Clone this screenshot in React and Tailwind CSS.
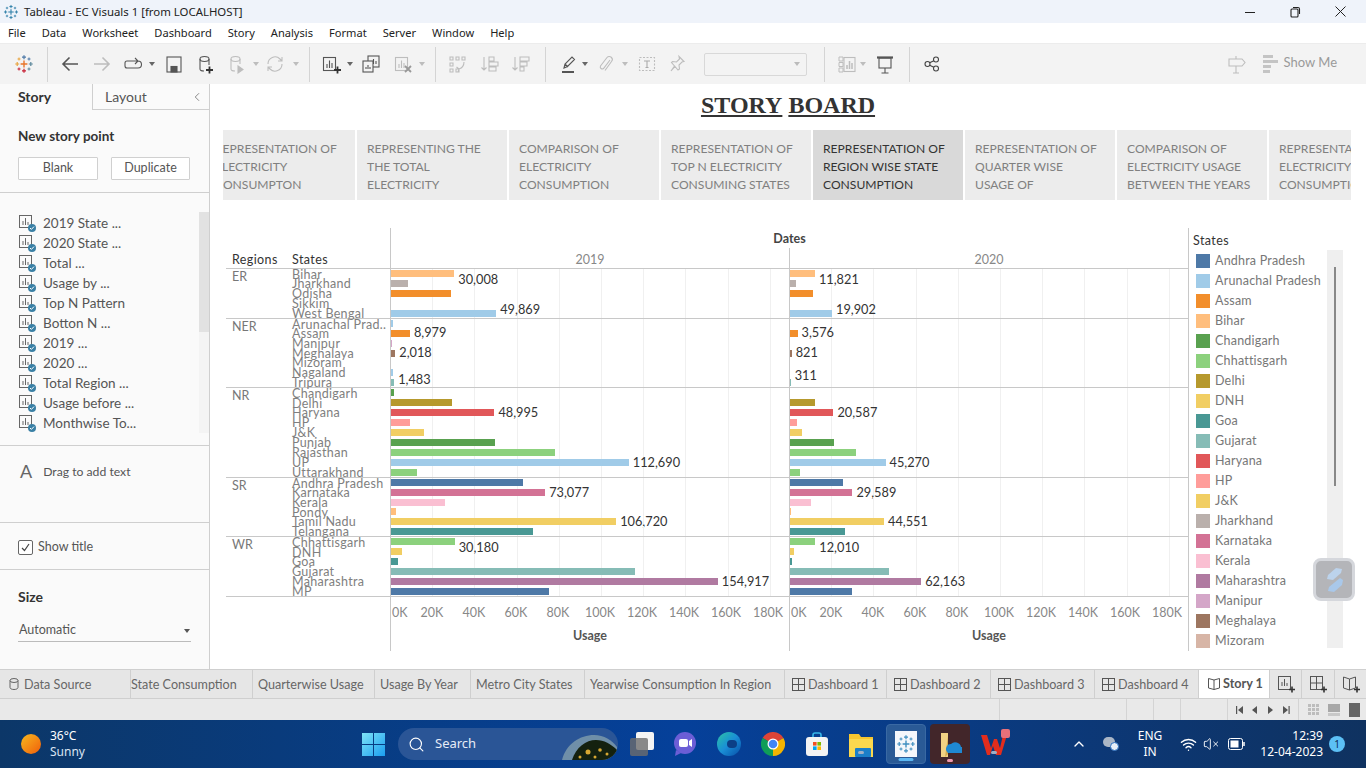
import React from 'react';
import { ChevronLeft, Search, Wifi, VolumeX, ChevronUp } from 'lucide-react';

const COLORS = {
  blue: '#4e79a7', sky: '#a0cbe8', orange: '#f28e2b', peach: '#ffbe7d', green: '#59a14f', lime: '#8cd17d',
  olive: '#b6992d', yellow: '#f1ce63', teal: '#499894', mint: '#86bcb6', red: '#e15759', rose: '#ff9d9a',
  stone: '#bab0ac', pink: '#d37295', blush: '#fabfd2', purple: '#b07aa1', mauve: '#d4a6c8', brown: '#9d7660', tan: '#d7b5a6',
};

const PX_PER_K = 2.11;

// a/b = usage in thousands for 2019/2020, la/lb = data label, da/db = label nudge
const REGIONS = [
  { name: 'ER', h: 'h-[50px]', rows: [
    { n: 'Bihar', c: 'peach', a: 30.008, b: 11.821, la: '30,008', lb: '11,821', da: 'translate-y-[5px]', db: 'translate-y-[5px]' },
    { n: 'Jharkhand', c: 'stone', a: 8.2, b: 2.8 },
    { n: 'Odisha', c: 'orange', a: 28.6, b: 10.8 },
    { n: 'Sikkim', c: 'sky', a: 0, b: 0 },
    { n: 'West Bengal', c: 'sky', a: 49.869, b: 19.902, la: '49,869', lb: '19,902', da: '-translate-y-[4px]', db: '-translate-y-[4px]' },
  ] },
  { name: 'NER', h: 'h-[69px]', rows: [
    { n: 'Arunachal Prad..', c: 'sky', a: 0.8, b: 0 },
    { n: 'Assam', c: 'orange', a: 8.979, b: 3.576, la: '8,979', lb: '3,576', da: '-translate-y-[1px]', db: '-translate-y-[1px]' },
    { n: 'Manipur', c: 'mauve', a: 0.7, b: 0 },
    { n: 'Meghalaya', c: 'brown', a: 2.018, b: 0.821, la: '2,018', lb: '821', da: '-translate-y-[1px]', db: '-translate-y-[1px]' },
    { n: 'Mizoram', c: 'tan', a: 0, b: 0 },
    { n: 'Nagaland', c: 'sky', a: 0.9, b: 0 },
    { n: 'Tripura', c: 'mint', a: 1.483, b: 0.311, la: '1,483', lb: '311', da: '-translate-y-[3px]', db: '-translate-y-[7px]' },
  ] },
  { name: 'NR', h: 'h-[90px]', rows: [
    { n: 'Chandigarh', c: 'green', a: 1.5, b: 0 },
    { n: 'Delhi', c: 'olive', a: 29, b: 11.9 },
    { n: 'Haryana', c: 'red', a: 48.995, b: 20.587, la: '48,995', lb: '20,587' },
    { n: 'HP', c: 'rose', a: 9.2, b: 3.2 },
    { n: 'J&K', c: 'yellow', a: 15.8, b: 5.7 },
    { n: 'Punjab', c: 'green', a: 49.5, b: 20.7 },
    { n: 'Rajasthan', c: 'lime', a: 77.9, b: 31.2 },
    { n: 'UP', c: 'sky', a: 112.69, b: 45.27, la: '112,690', lb: '45,270' },
    { n: 'Uttarakhand', c: 'lime', a: 12.5, b: 4.8 },
  ] },
  { name: 'SR', h: 'h-[59px]', rows: [
    { n: 'Andhra Pradesh', c: 'blue', a: 62.7, b: 25.1 },
    { n: 'Karnataka', c: 'pink', a: 73.077, b: 29.589, la: '73,077', lb: '29,589' },
    { n: 'Kerala', c: 'blush', a: 25.7, b: 9.9 },
    { n: 'Pondy', c: 'peach', a: 2.5, b: 0.4 },
    { n: 'Tamil Nadu', c: 'yellow', a: 106.72, b: 44.551, la: '106,720', lb: '44,551' },
    { n: 'Telangana', c: 'teal', a: 67.4, b: 26 },
  ] },
  { name: 'WR', h: 'h-[60px]', rows: [
    { n: 'Chhattisgarh', c: 'lime', a: 30.18, b: 12.01, la: '30,180', lb: '12,010', da: 'translate-y-[5px]', db: 'translate-y-[5px]' },
    { n: 'DNH', c: 'yellow', a: 5.4, b: 1.8 },
    { n: 'Goa', c: 'teal', a: 3.4, b: 0.9 },
    { n: 'Gujarat', c: 'mint', a: 115.6, b: 46.9 },
    { n: 'Maharashtra', c: 'purple', a: 154.917, b: 62.163, la: '154,917', lb: '62,163' },
    { n: 'MP', c: 'blue', a: 75, b: 29.4 },
  ] },
];

const LEGEND = [
  ['Andhra Pradesh', 'blue'], ['Arunachal Pradesh', 'sky'], ['Assam', 'orange'], ['Bihar', 'peach'], ['Chandigarh', 'green'],
  ['Chhattisgarh', 'lime'], ['Delhi', 'olive'], ['DNH', 'yellow'], ['Goa', 'teal'], ['Gujarat', 'mint'], ['Haryana', 'red'],
  ['HP', 'rose'], ['J&K', 'yellow'], ['Jharkhand', 'stone'], ['Karnataka', 'pink'], ['Kerala', 'blush'], ['Maharashtra', 'purple'],
  ['Manipur', 'mauve'], ['Meghalaya', 'brown'], ['Mizoram', 'tan'],
];

const STORY_POINTS = [
  { lines: ['REPRESENTATION OF', 'ELECTRICITY', 'CONSUMPTON'], cls: '-ml-[18px]' },
  { lines: ['REPRESENTING THE', 'THE TOTAL', 'ELECTRICITY'] },
  { lines: ['COMPARISON OF', 'ELECTRICITY', 'CONSUMPTION'] },
  { lines: ['REPRESENTATION OF', 'TOP N ELECTRICITY', 'CONSUMING STATES'] },
  { lines: ['REPRESENTATION OF', 'REGION WISE STATE', 'CONSUMPTION'], active: true },
  { lines: ['REPRESENTATION OF', 'QUARTER WISE', 'USAGE OF'] },
  { lines: ['COMPARISON OF', 'ELECTRICITY USAGE', 'BETWEEN THE YEARS'] },
  { lines: ['REPRESENTATION OF', 'ELECTRICITY', 'CONSUMPTION'] },
];

const SHEETS = ['2019 State ...', '2020 State ...', 'Total ...', 'Usage by ...', 'Top N Pattern', 'Botton N ...', '2019 ...', '2020 ...', 'Total Region ...', 'Usage before ...', 'Monthwise To...'];
const TICKS = ['20K', '40K', '60K', '80K', '100K', '120K', '140K', '160K', '180K'];
const MENU = ['File', 'Data', 'Worksheet', 'Dashboard', 'Story', 'Analysis', 'Format', 'Server', 'Window', 'Help'];

/* ---------- small drawings ---------- */

const Icon = ({ className = '', children, stroke = '#555', size = 20, box = 20 }) => (
  <svg width={size} height={size} viewBox={`0 0 ${box} ${box}`} fill="none" stroke={stroke} strokeWidth="1.1" className={`shrink-0 ${className}`}>
    {children}
  </svg>
);

const Plus = ({ x, y, r, c, w = 1.2 }) => (
  <g stroke={c} strokeWidth={w}>
    <path d={`M${x - r} ${y}H${x + r}M${x} ${y - r}V${y + r}`} />
  </g>
);

const TableauMark = ({ className = '', size = 20, colors }) => {
  const [a, b, c, d, e] = colors;
  return (
    <svg width={size} height={size} viewBox="0 0 20 20" fill="none" className={`shrink-0 ${className}`}>
      <Plus x={10} y={10} r={3.4} c={a} w={1.4} />
      <Plus x={10} y={3.2} r={2} c={b} />
      <Plus x={10} y={16.8} r={2} c={c} />
      <Plus x={3.2} y={10} r={2} c={d} />
      <Plus x={16.8} y={10} r={2} c={e} />
      <Plus x={5} y={5} r={1.5} c={d} w={1} />
      <Plus x={15} y={5} r={1.5} c={b} w={1} />
      <Plus x={5} y={15} r={1.5} c={c} w={1} />
      <Plus x={15} y={15} r={1.5} c={e} w={1} />
    </svg>
  );
};

const Caret = ({ className = '', color = '#666' }) => (
  <svg width="6" height="4" viewBox="0 0 6 4" className={`shrink-0 ${className}`}><path d="M0 0h6L3 4z" fill={color} /></svg>
);

const Sep = ({ className = '' }) => <div className={`w-px h-[35px] bg-[#d4d4d4] shrink-0 ${className}`} />;

const BarsGlyph = ({ stroke }) => (
  <>
    <rect x="2.5" y="3.5" width="12" height="13" stroke={stroke} />
    <path d="M6 14V10M8.5 14V6.5M11 14V9" stroke={stroke} />
  </>
);

const SheetIcon = () => (
  <div className="relative w-[16px] h-[16px] shrink-0">
    <svg width="14" height="14" viewBox="0 0 14 14" fill="none" stroke="#666" strokeWidth="1">
      <rect x="0.5" y="0.5" width="12" height="12" />
      <path d="M4 10V6M6.5 10V3M9 10V7" />
    </svg>
    <div className="absolute right-[-1px] bottom-[-1px] w-[8px] h-[8px] rounded-full bg-[#3a80a5] flex items-center justify-center">
      <svg width="6" height="6" viewBox="0 0 6 6" fill="none" stroke="#fff" strokeWidth="1"><path d="M1 3l1.4 1.4L5 1.6" /></svg>
    </div>
  </div>
);

const GridTabIcon = () => (
  <svg width="13" height="13" viewBox="0 0 13 13" fill="none" stroke="#555" strokeWidth="1" className="shrink-0">
    <rect x="0.5" y="0.5" width="12" height="12" />
    <path d="M6.5 0.5V12.5M0.5 6.5H12.5" />
  </svg>
);

const BookIcon = ({ stroke = '#555' }) => (
  <svg width="14" height="14" viewBox="0 0 14 14" fill="none" stroke={stroke} strokeWidth="1" className="shrink-0">
    <path d="M7 3L1.5 1.5V11L7 12.5L12.5 11V1.5ZM7 3V12.5" />
  </svg>
);

const AddTabIcon = ({ children }) => (
  <svg width="20" height="20" viewBox="0 0 20 20" fill="none" stroke="#555" strokeWidth="1">
    {children}
    <path d="M13 15.5H19M16 12.5V18.5" strokeWidth="1.6" stroke="#333" />
  </svg>
);

/* ---------- top of the window ---------- */

function TitleBar() {
  return (
    <div className="h-[23px] bg-[#eff3fa] flex items-center shrink-0">
      <TableauMark className="ml-[3px]" size={16} colors={['#2f7fa8', '#2f7fa8', '#2f7fa8', '#2f7fa8', '#2f7fa8']} />
      <span className="ml-[5px] text-[11.4px] text-[#222] font-['Noto_Sans',sans-serif]">Tableau - EC Visuals 1 [from LOCALHOST]</span>
      <div className="ml-auto flex items-center">
        <svg width="12" height="12" viewBox="0 0 12 12" className="mr-[33px]" stroke="#222" fill="none"><path d="M1 6.5H11" /></svg>
        <svg width="12" height="12" viewBox="0 0 12 12" className="mr-[33px]" stroke="#222" fill="none" strokeWidth="1.1"><rect x="2" y="3" width="7" height="8" rx="1" /><path d="M4 1.5H9a1.5 1.5 0 0 1 1.5 1.5V8" /></svg>
        <svg width="13" height="13" viewBox="0 0 13 13" className="mr-[19px]" stroke="#222" fill="none"><path d="M1.5 1.5L11.5 11.5M11.5 1.5L1.5 11.5" /></svg>
      </div>
    </div>
  );
}

function MenuBar() {
  return (
    <div className="h-[20px] bg-white flex items-center gap-[16px] pl-[8px] shrink-0 text-[11.1px] text-[#222] font-['Noto_Sans',sans-serif]">
      {MENU.map((m) => <span key={m}>{m}</span>)}
    </div>
  );
}

function Toolbar() {
  const off = '#bdbdbd';
  return (
    <div className="h-[41px] bg-[#f3f3f3] flex items-center shrink-0 border-t border-[#ececec]">
      <TableauMark className="ml-[14px]" colors={['#e8762b', '#4e79a7', '#c72035', '#e8a33d', '#5b879b']} />
      <Sep className="ml-[13px]" />
      <Icon className="ml-[12px]" stroke="#555" ><path d="M18 10H3M9.5 3.5L3 10l6.5 6.5" strokeWidth="1.6" /></Icon>
      <Icon className="ml-[12px]" stroke={off}><path d="M2 10H17M10.5 3.5L17 10l-6.5 6.5" strokeWidth="1.6" /></Icon>
      <Icon className="ml-[11px]"><path d="M4 7h11a3 3 0 0 1 0 7H4a2 2 0 0 1-2-2V9a2 2 0 0 1 2-2M12 4l3 3-3 3" /></Icon>
      <Caret className="ml-[6px]" />
      <Icon className="ml-[9px]"><rect x="3" y="3" width="14" height="15" /><rect x="7" y="12.5" width="6" height="5.5" fill="#555" /></Icon>
      <Icon className="ml-[11px]"><path d="M5 5v10c0 1 1.5 2 4 2M14 5v6" /><ellipse cx="9.5" cy="5" rx="4.5" ry="2.5" /><path d="M11 16h7M14.5 12.5v7" strokeWidth="1.8" stroke="#333" /></Icon>
      <Icon className="ml-[11px]" stroke={off}><path d="M5 5v10c0 1 1.5 2 4 2M14 5v5" /><ellipse cx="9.5" cy="5" rx="4.5" ry="2.5" /><path d="M12 12l5 3.5-5 3.5z" fill={off} /></Icon>
      <Caret className="ml-[7px]" color={off} />
      <Icon className="ml-[6px]" stroke={off}><path d="M3 10a7 7 0 0 1 12-5l2 2M17 10a7 7 0 0 1-12 5l-2-2M17 3v4h-4M3 17v-4h4" /></Icon>
      <Caret className="ml-[8px]" color={off} />
      <Sep className="ml-[10px]" />
      <Icon className="ml-[11px]"><BarsGlyph stroke="#555" /><path d="M13 16h7M16.5 12.5v7" strokeWidth="1.8" stroke="#333" /></Icon>
      <Caret className="ml-[6px]" />
      <Icon className="ml-[8px]"><rect x="7" y="2" width="11" height="11" fill="#f3f3f3" /><path d="M10 10V7.5M12.5 10V5M15 10V7" /><rect x="2" y="7" width="10" height="11" fill="#f3f3f3" /><path d="M5 15v-2M7 15v-4M9 15v-2" /></Icon>
      <Icon className="ml-[12px]" stroke={off}><BarsGlyph stroke={off} /><path d="M12 12l6 6M18 12l-6 6" strokeWidth="1.8" stroke="#999" /></Icon>
      <Caret className="ml-[6px]" color={off} />
      <Sep className="ml-[10px]" />
      <Icon className="ml-[11px]" stroke={off}><path d="M3 3h3v3H3zM9 3h3v3H9zM15 3h3v3h-3zM3 9h3v3H3zM3 15h3v3H3zM9 15h3v3H9zM17 8c0 4-2 6-5 7M9.5 13l2.5 2-1 3" /></Icon>
      <Icon className="ml-[13px]" stroke={off}><path d="M4 3v13M1.5 13.5L4 16l2.5-2.5M9 3h5v4H9zM9 8h9v4H9zM9 13h7v4H9z" /></Icon>
      <Icon className="ml-[11px]" stroke={off}><path d="M4 3v13M1.5 13.5L4 16l2.5-2.5M9 3h9v4H9zM9 8h7v4H9zM9 13h4v4H9z" /></Icon>
      <Sep className="ml-[14px]" />
      <Icon className="ml-[12px]"><path d="M6 14l1-4 7-7 2.5 2.5-7 7zM7 10l3 3" strokeWidth="1.1" /><path d="M4 18h12" strokeWidth="2" /></Icon>
      <Caret className="ml-[4px]" />
      <Icon className="ml-[7px]" stroke={off}><path d="M15 6l-6.5 8.5a2 2 0 0 1-3-2.5L12 3.5a3 3 0 0 1 4.5 4L10 16.5" /></Icon>
      <Caret className="ml-[7px]" color={off} />
      <Icon className="ml-[9px]" stroke={off}><rect x="2.5" y="3.5" width="15" height="13" strokeDasharray="2 1.5" /><path d="M7 7h6M10 7v6.5M8.5 13.5h3" stroke="#aaa" /></Icon>
      <Icon className="ml-[10px]" stroke={off}><path d="M12 2.5l5 5-2 .5-3 3 .5 4-1.5 1-3-3.5-4 4.5 3.5-5-3-3.5 1-1 4 .5 3-3z" /></Icon>
      <div className="ml-[17px] w-[103px] h-[23px] border border-[#d8d8d8] rounded-[2px] flex items-center justify-end pr-[6px] shrink-0"><Caret color="#bbb" /></div>
      <Sep className="ml-[17px]" />
      <Icon className="ml-[12px]" stroke={off}><path d="M2 3h4v4H2zM2 8.5h4v4H2zM2 14h4v4H2z" strokeWidth="1" /><rect x="7" y="3.5" width="11" height="14" /><path d="M10 15v-4M12.5 15V7M15 15v-6" strokeWidth="1.5" /></Icon>
      <Caret className="ml-[3px]" color={off} />
      <Icon className="ml-[9px]" stroke="#555"><path d="M2 3.5h16" strokeWidth="2.2" /><rect x="4" y="4" width="12" height="10" /><path d="M10 14v5M6.5 19h7" /></Icon>
      <Sep className="ml-[14px]" />
      <Icon className="ml-[12px]" stroke="#444"><circle cx="5.5" cy="10" r="2.5" /><circle cx="14" cy="5.5" r="2.5" /><circle cx="14" cy="14.5" r="2.5" /><path d="M7.7 8.8L11.8 6.7M7.7 11.2L11.8 13.3" /></Icon>
      <div className="ml-auto flex items-center pr-[29px]">
        <Icon stroke={off}><path d="M2 5h13l3 3.5-3 3.5H2zM9 2v3M9 12v7M6 19h6" /></Icon>
        <svg width="16" height="18" viewBox="0 0 16 18" className="ml-[16px]" fill="#c4c4c4"><rect x="0" y="0" width="10" height="3" /><rect x="0" y="5" width="15" height="3" /><rect x="0" y="10" width="8" height="3" /><rect x="0" y="15" width="7" height="3" /></svg>
        <span className="ml-[5px] pb-[2px] text-[13px] text-[#9a9a9a] font-['Lato',sans-serif]">Show Me</span>
      </div>
    </div>
  );
}

/* ---------- left pane ---------- */

function SidePane() {
  return (
    <aside className="w-[210px] shrink-0 bg-[#fafafa] border-r border-[#cfcfcf] flex flex-col text-[#555] font-['Lato',sans-serif]">
      <div className="h-[26px] flex shrink-0">
        <div className="w-[92px] pl-[18px] pb-[1px] font-bold text-[14px] text-[#333] flex items-center">Story</div>
        <div className="flex-1 border-l border-b border-[#cfcfcf] pl-[12px] text-[14px] flex items-center justify-between pr-[5px]">
          Layout
          <ChevronLeft size={14} strokeWidth={1.3} color="#666" />
        </div>
      </div>
      <div className="h-[83px] border-b border-[#cfcfcf] px-[18px] pt-[17px] shrink-0">
        <div className="font-bold text-[13.5px] leading-[18px] text-[#333]">New story point</div>
        <div className="flex gap-[13px] mt-[12px] text-[12.5px]">
          <div className="w-[80px] h-[23px] bg-white border border-[#d0d0d0] rounded-[1px] flex items-center justify-center">Blank</div>
          <div className="w-[79px] h-[23px] bg-white border border-[#d0d0d0] rounded-[1px] flex items-center justify-center">Duplicate</div>
        </div>
      </div>
      <div className="h-[253px] border-b border-[#cfcfcf] flex shrink-0 pt-[19px]">
        <div className="flex-1 pl-[19px] pt-[1px]">
          {SHEETS.map((s) => (
            <div key={s} className="h-[20px] flex items-center gap-[8px] text-[13.5px] text-[#555]">
              <SheetIcon />
              <span className="whitespace-nowrap">{s}</span>
            </div>
          ))}
        </div>
        <div className="w-[10px] h-[221px] bg-[#f4f4f4] mr-0">
          <div className="h-[120px] bg-[#e2e2e2]" />
        </div>
      </div>
      <div className="h-[77px] border-b border-[#cfcfcf] flex items-start pl-[20px] pt-[14px] shrink-0">
        <span className="text-[18px] leading-[22px] text-[#666]">A</span>
        <span className="ml-[11px] text-[12.2px] leading-[24px]">Drag to add text</span>
      </div>
      <div className="h-[47px] border-b border-[#cfcfcf] flex items-center pl-[18px] pt-[2px] shrink-0">
        <div className="w-[15px] h-[15px] border border-[#666] rounded-[2px] bg-white flex items-center justify-center">
          <svg width="11" height="11" viewBox="0 0 11 11" fill="none" stroke="#444" strokeWidth="1.2"><path d="M2 6l2.5 2.5L9 2" /></svg>
        </div>
        <span className="ml-[5px] text-[12.5px]">Show title</span>
      </div>
      <div className="flex-1 px-[18px] pt-[17px]">
        <div className="font-bold text-[14px] leading-[20px] text-[#333]">Size</div>
        <div className="mt-[14px] h-[21px] border-b border-[#bbb] flex items-center justify-between pl-[1px] pb-[1px] text-[12.5px]">
          Automatic
          <Caret color="#555" className="mr-[1px]" />
        </div>
      </div>
    </aside>
  );
}

/* ---------- the chart ---------- */

function BarCell({ value, color, label, nudge = '' }) {
  return (
    <div className="w-[399px] h-full border-l border-[#c8c8c8] flex items-center bg-[repeating-linear-gradient(90deg,transparent_0,transparent_41.2px,#f0f0f0_41.2px,#f0f0f0_42.2px)]">
      {value > 0 && <div className="h-[7px] shrink-0" style={{ width: value * PX_PER_K, backgroundColor: color }} />}
      {label && <span className={`ml-[4px] text-[12.75px] leading-none text-[#333] whitespace-nowrap ${nudge}`}>{label}</span>}
    </div>
  );
}

function AxisCell() {
  return (
    <div className="w-[399px] h-full border-l border-[#c8c8c8] flex flex-col">
      <div className="flex pt-[9px] text-[12.5px] leading-[14px] text-[#888]">
        <div className="w-[20px] pl-[1px]">0K</div>
        {TICKS.map((t) => <div key={t} className="w-[42.2px] text-center">{t}</div>)}
      </div>
      <div className="mt-[8px] text-center text-[12.5px] font-bold leading-[16px] text-[#555]">Usage</div>
    </div>
  );
}

function Chart() {
  return (
    <div className="flex ml-[16px] mt-[28px] h-[423px] font-['Lato',sans-serif]">
      <div className="w-[962px] flex flex-col shrink-0">
        <div className="h-[40px] flex shrink-0">
          <div className="w-[164px] flex items-end pl-[6px] text-[12.5px] leading-[16px] text-[#333] tracking-[0.4px]">
            <span className="w-[60px]">Regions</span>
            <span>States</span>
          </div>
          <div className="flex-1 flex flex-col border-l border-[#c8c8c8]">
            <div className="h-[20px] flex items-end justify-center text-[12.5px] font-bold text-[#444] leading-[18px]">Dates</div>
            <div className="h-[20px] flex text-[12.5px] text-[#888]">
              <div className="w-[398px] text-center leading-[24px]">2019</div>
              <div className="w-[399px] border-l border-[#c8c8c8] text-center leading-[24px]">2020</div>
            </div>
          </div>
        </div>
        {REGIONS.map((r) => (
          <div key={r.name} className={`${r.h} flex border-t border-[#c8c8c8] shrink-0`}>
            <div className="w-[66px] pl-[6px] text-[12.5px] leading-[16px] text-[#777] shrink-0">{r.name}</div>
            <div className="flex-1 flex flex-col min-w-0">
              {r.rows.map((row) => (
                <div key={row.n} className="flex-1 min-h-0 flex items-center">
                  <div className="w-[98px] shrink-0 text-[12.5px] leading-none text-[#808080] whitespace-nowrap tracking-[0.3px] translate-y-[0.5px]">{row.n}</div>
                  <BarCell value={row.a} color={COLORS[row.c]} label={row.la} nudge={row.da} />
                  <BarCell value={row.b} color={COLORS[row.c]} label={row.lb} nudge={row.db} />
                </div>
              ))}
            </div>
          </div>
        ))}
        <div className="flex-1 flex border-t border-[#c8c8c8]">
          <div className="w-[164px] shrink-0" />
          <AxisCell />
          <AxisCell />
        </div>
      </div>
      <div className="flex-1 border-l border-[#c8c8c8] pl-[4px] flex flex-col min-w-0">
        <div className="text-[12.5px] leading-[16px] text-[#333] tracking-[0.4px] pt-[5px] h-[22px] shrink-0">States</div>
        <div className="flex h-[398px]">
          <div className="w-[134px] overflow-hidden pl-[3px] pt-[1px] shrink-0">
            {LEGEND.map(([name, c]) => (
              <div key={name} className="h-[20px] flex items-center whitespace-nowrap text-[12.5px] text-[#777] tracking-[0.2px]">
                <div className="w-[14px] h-[14px] shrink-0" style={{ backgroundColor: COLORS[c] }} />
                <span className="ml-[5px]">{name}</span>
              </div>
            ))}
          </div>
          <div className="w-[16px] h-full bg-[#efefef] pl-[7px] pt-[17px] shrink-0">
            <div className="w-[2px] h-[219px] bg-[#888]" />
          </div>
        </div>
      </div>
    </div>
  );
}

function StoryPane() {
  return (
    <main className="flex-1 min-w-0 bg-white relative overflow-hidden">
      <div className="h-[46px] pb-[4px] flex items-center justify-center font-['Liberation_Serif',serif] font-bold text-[24px] text-[#333] gap-[6px]">
        <span className="underline decoration-2 underline-offset-2">STORY</span>
        <span className="underline decoration-2 underline-offset-2">BOARD</span>
      </div>
      <div className="ml-[13px] w-[1128px] h-[70px] flex gap-[2px] overflow-hidden font-['Lato',sans-serif]">
        {STORY_POINTS.map((p, i) => (
          <div key={i} className={`w-[150px] shrink-0 pl-[10px] pt-[10px] text-[12.1px] leading-[18px] whitespace-nowrap ${p.active ? 'bg-[#d9d9d9] text-[#333]' : 'bg-[#ececec] text-[#808080]'} ${p.cls || ''}`}>
            {p.lines.map((l) => <div key={l}>{l}</div>)}
          </div>
        ))}
      </div>
      <Chart />
      {/* floating widget that sits over the legend */}
      <div className="absolute left-[1103px] top-[474px] w-[42px] h-[43px] rounded-[8px] bg-[#b4b5b9] border-[3px] border-[#d5d7dc] flex items-center justify-center">
        <svg width="20" height="26" viewBox="0 0 20 26"><path d="M12 1l6 1-1 4-8 7-6-1 1-4z" fill="#bcd3ec" /><path d="M16 11l3 2-1 5-8 7-6-1 1-4z" fill="#a9c8ea" /></svg>
      </div>
    </main>
  );
}

/* ---------- bottom tabs, status and taskbar ---------- */

function Tab({ w, children, first }) {
  return <div className={`${w} h-full shrink-0 flex items-center ${first ? '' : 'border-l border-[#cfcfcf]'}`}>{children}</div>;
}

function SheetTabs() {
  const txt = 'text-[12.6px] text-[#666] whitespace-nowrap pt-[2px]';
  const dashboards = [['Dashboard 1', 'w-[102px]'], ['Dashboard 2', 'w-[104px]'], ['Dashboard 3', 'w-[104px]'], ['Dashboard 4', 'w-[104px]']];
  return (
    <div className="h-[30px] shrink-0 bg-[#e6e6e6] border-y border-[#cfcfcf] flex font-['Lato',sans-serif]">
      <Tab w="w-[130px]" first>
        <svg width="10" height="12" viewBox="0 0 10 12" fill="none" stroke="#666" className="ml-[9px]"><ellipse cx="5" cy="2.5" rx="4" ry="2" /><path d="M1 2.5v7c0 1 1.5 2 4 2s4-1 4-2v-7" /></svg>
        <span className={`${txt} ml-[5px]`}>Data Source</span>
      </Tab>
      <Tab w="w-[122px]"><span className={txt}>State Consumption</span></Tab>
      <Tab w="w-[122px]"><span className={`${txt} pl-[5px]`}>Quarterwise Usage</span></Tab>
      <Tab w="w-[96px]"><span className={`${txt} pl-[5px]`}>Usage By Year</span></Tab>
      <Tab w="w-[114px]"><span className={`${txt} pl-[5px]`}>Metro City States</span></Tab>
      <Tab w="w-[200px]"><span className={`${txt} pl-[5px]`}>Yearwise Consumption In Region</span></Tab>
      {dashboards.map(([d, w]) => (
        <Tab key={d} w={w}>
          <span className="ml-[7px] flex items-center"><GridTabIcon /></span>
          <span className={`${txt} ml-[3px]`}>{d}</span>
        </Tab>
      ))}
      <div className="w-[71px] h-full shrink-0 bg-white border-l border-[#cfcfcf] flex items-center pl-[8px]">
        <BookIcon />
        <span className="ml-[2px] text-[12.6px] font-bold text-[#555]">Story 1</span>
      </div>
      <Tab w="w-[32px]"><span className="ml-[6px] flex"><AddTabIcon><rect x="2.5" y="2.5" width="12" height="13" /><path d="M6 12V8M8.5 12V5M11 12V9" /></AddTabIcon></span></Tab>
      <Tab w="w-[33px]"><span className="ml-[6px] flex"><AddTabIcon><rect x="2.5" y="2.5" width="12" height="13" /><path d="M8.5 2.5V15.5M2.5 9H14.5" /></AddTabIcon></span></Tab>
      <Tab w="w-[32px]"><span className="ml-[6px] flex"><AddTabIcon><path d="M8.5 5L2.5 3V14L8.5 16L14.5 14V3ZM8.5 5V16" /></AddTabIcon></span></Tab>
    </div>
  );
}

function StatusBar() {
  const Divider = ({ cls }) => <div className={`h-full w-px bg-[#d4d4d4] shrink-0 ${cls}`} />;
  return (
    <div className="h-[21px] shrink-0 bg-[#e9e9e9] flex items-center">
      <Divider cls="ml-[999px]" />
      <Divider cls="ml-[126px]" />
      <Divider cls="ml-[26px]" />
      <Divider cls="ml-[26px]" />
      <Divider cls="ml-[46px]" />
      <svg width="56" height="10" viewBox="0 0 56 10" fill="#555" className="ml-[7px] shrink-0">
        <path d="M1 1h1.2v8H1zM8 1v8L3 5zM22 1v8l-5-4zM33 1v8l5-4zM48 1v8l5-4zM53.5 1h1.2v8h-1.2z" />
      </svg>
      <Divider cls="ml-[7px]" />
      <div className="ml-[9px] grid grid-cols-3 gap-[1px] w-[11px] h-[11px] shrink-0">
        {Array.from({ length: 9 }).map((_, i) => <div key={i} className="bg-[#bdbdbd]" />)}
      </div>
      <div className="ml-[9px] w-[12px] h-[12px] flex flex-col gap-[1px] shrink-0">
        <div className="h-[8px] bg-[#a8a8a8]" />
        <div className="h-[3px] bg-[#c8c8c8]" />
      </div>
      <div className="ml-[9px] w-[11px] h-[14px] bg-[#666] shrink-0" />
    </div>
  );
}

function Taskbar() {
  const white = "text-[12px] leading-[16px] text-white font-['Noto_Sans',sans-serif]";
  const Dot = ({ cls }) => <div className={`absolute left-1/2 -translate-x-1/2 bottom-[2px] h-[3px] rounded-full ${cls}`} />;
  return (
    <div className="h-[48px] shrink-0 bg-gradient-to-r from-[#0c3768] via-[#05409a] to-[#0f3260] flex items-center relative">
      <div className="ml-[21px] w-[20px] h-[20px] rounded-full bg-gradient-to-br from-[#f5b81e] to-[#ee5a0a] shrink-0" />
      <div className={`ml-[9px] w-[50px] ${white}`}>
        <div>36°C</div>
        <div className="text-[#dbe4f2]">Sunny</div>
      </div>
      <svg width="23" height="23" viewBox="0 0 23 23" className="ml-[262px] shrink-0">
        <defs><linearGradient id="win" x1="0" y1="0" x2="1" y2="1"><stop offset="0" stopColor="#7fe3f7" /><stop offset="1" stopColor="#1a9ef0" /></linearGradient></defs>
        <path d="M0 0h11v11H0zM12 0h11v11H12zM0 12h11v11H0zM12 12h11v11H12z" fill="url(#win)" />
      </svg>
      <div className="ml-[13px] w-[220px] h-[32px] rounded-full bg-[#2a5596] flex items-center pl-[10px] shrink-0 overflow-hidden relative">
        <Search size={17} color="#fff" strokeWidth={1.6} />
        <span className="ml-[10px] text-[13px] text-[#e6ecf6] font-['Noto_Sans',sans-serif]">Search</span>
        <svg width="58" height="28" viewBox="0 0 58 28" className="ml-auto self-end shrink-0">
          <path d="M2 28C6 12 20 3 34 3c10 0 18 5 23 12v13z" fill="#6f8fa8" />
          <path d="M12 28C16 15 26 8 36 8c8 0 15 4 21 10v10z" fill="#14210f" />
          <circle cx="28" cy="20" r="2.5" fill="#d8a832" /><circle cx="40" cy="18" r="1.8" fill="#d8a832" /><circle cx="47" cy="22" r="1.5" fill="#d8a832" /><circle cx="35" cy="25" r="1.5" fill="#d8a832" /><circle cx="20" cy="25" r="1.5" fill="#d8a832" />
        </svg>
      </div>
      {/* task view */}
      <div className="ml-[12px] w-[24px] h-[24px] relative shrink-0">
        <div className="absolute right-0 top-0 w-[18px] h-[18px] bg-[#f4f4f4] rounded-[2px]" />
        <div className="absolute left-0 bottom-0 w-[18px] h-[18px] bg-[#6d6d6d]/80 rounded-[2px]" />
      </div>
      {/* chat */}
      <svg width="24" height="24" viewBox="0 0 24 24" className="ml-[19px] shrink-0">
        <circle cx="12" cy="11" r="11" fill="#6b5ed6" /><path d="M3 18l-1 6 6-3z" fill="#6b5ed6" /><rect x="6" y="7" width="9" height="8" rx="2" fill="#fff" /><path d="M16 9l3-2v8l-3-2z" fill="#fff" />
      </svg>
      {/* edge */}
      <div className="ml-[20px] w-[24px] h-[24px] rounded-full bg-gradient-to-br from-[#35c1a0] via-[#1b8ed6] to-[#0b4fa8] flex items-center justify-center shrink-0">
        <div className="w-[10px] h-[8px] rounded-full bg-[#0c3f86] translate-x-[3px]" />
      </div>
      {/* chrome */}
      <svg width="24" height="24" viewBox="0 0 24 24" className="ml-[20px] shrink-0">
        <path d="M12 12L1.6 6A12 12 0 0 1 22.4 6z" fill="#db4437" /><path d="M12 12L22.4 6A12 12 0 0 1 12 24z" fill="#f4b400" /><path d="M12 12L12 24A12 12 0 0 1 1.6 6z" fill="#0f9d58" />
        <circle cx="12" cy="12" r="5.5" fill="#fff" /><circle cx="12" cy="12" r="4.3" fill="#4285f4" />
      </svg>
      {/* store */}
      <svg width="24" height="24" viewBox="0 0 24 24" className="ml-[20px] shrink-0">
        <path d="M8 6V3a2 2 0 0 1 2-2h4a2 2 0 0 1 2 2v3" fill="none" stroke="#38b6e8" strokeWidth="1.6" />
        <rect x="1" y="5" width="22" height="19" rx="3" fill="#f3f3f3" />
        <rect x="8" y="10" width="3.6" height="3.6" fill="#f25022" /><rect x="12.4" y="10" width="3.6" height="3.6" fill="#7fba00" /><rect x="8" y="14.4" width="3.6" height="3.6" fill="#00a4ef" /><rect x="12.4" y="14.4" width="3.6" height="3.6" fill="#ffb900" />
      </svg>
      {/* explorer */}
      <div className="relative ml-[20px] w-[24px] h-[24px] shrink-0">
        <svg width="24" height="26" viewBox="0 0 24 26"><path d="M0 2h10l2 3h12v20H0z" fill="#f7c62f" /><path d="M0 7h24v18H0z" fill="#fbd84e" /><rect x="6" y="16" width="16" height="9" rx="1" fill="#1b7fc9" /></svg>
        <Dot cls="w-[6px] bg-[#9fb0c6] bottom-[-8px]" />
      </div>
      {/* tableau, active */}
      <div className="relative ml-[13px] w-[40px] h-[40px] rounded-[4px] bg-[#2a5a96] border border-[#3a69a3] flex items-center justify-center shrink-0">
        <div className="w-[22px] h-[26px] bg-[#f4f7fb] flex items-center justify-center"><TableauMark size={20} colors={['#3f8fc0', '#3f8fc0', '#3f8fc0', '#3f8fc0', '#3f8fc0']} /></div>
        <Dot cls="w-[15px] bg-[#5cb8f2]" />
      </div>
      {/* onedrive folder */}
      <div className="relative ml-[4px] w-[40px] h-[40px] rounded-[4px] bg-[#42262a] flex items-center justify-center shrink-0">
        <svg width="24" height="26" viewBox="0 0 24 26"><path d="M3 2h7v24H3z" fill="#f2d284" /><path d="M10 5v18l-3 3z" fill="#d4ac52" /><path d="M10 22a5 5 0 0 1 3-9 6 6 0 0 1 10 3 3 3 0 0 1 0 6z" fill="#1e88d2" /></svg>
        <Dot cls="w-[6px] bg-[#f09ab0]" />
      </div>
      {/* wps */}
      <div className="relative ml-[11px] w-[26px] h-[24px] shrink-0">
        <svg width="26" height="24" viewBox="0 0 26 24"><path d="M0 3h6l4 13 3-9h3l3 9 3-13h4l-6 20h-5l-3-9-3 9H6z" fill="#e32d1d" /></svg>
        <div className="absolute right-[-3px] top-[-3px] w-[9px] h-[9px] rounded-[2px] bg-[#e8707a]" />
        <Dot cls="w-[6px] bg-[#9fb0c6] bottom-[-8px]" />
      </div>
      {/* tray */}
      <ChevronUp size={16} color="#fff" className="ml-[64px] shrink-0" />
      <div className="ml-[16px] relative w-[16px] h-[14px] shrink-0">
        <div className="absolute left-0 top-0 w-[12px] h-[10px] rounded-full bg-[#aab6c6]" />
        <div className="absolute right-0 bottom-0 w-[9px] h-[9px] rounded-full bg-[#e7eef7] border border-[#2a6fc0]" />
      </div>
      <div className={`ml-[16px] w-[30px] text-center ${white}`}>
        <div>ENG</div>
        <div>IN</div>
      </div>
      <Wifi size={17} color="#fff" className="ml-[15px] shrink-0" />
      <VolumeX size={16} color="#fff" strokeWidth={1.4} className="ml-[6px] shrink-0" />
      <svg width="18" height="12" viewBox="0 0 18 12" fill="none" stroke="#fff" className="ml-[9px] shrink-0"><rect x="0.5" y="0.5" width="14" height="11" rx="2" /><rect x="2.5" y="2.5" width="8" height="7" fill="#fff" stroke="none" /><path d="M16 4v4" strokeWidth="1.5" /></svg>
      <div className={`ml-auto text-right w-[70px] ${white}`}>
        <div>12:39</div>
        <div>12-04-2023</div>
      </div>
      <div className="ml-[6px] mr-[21px] w-[16px] h-[16px] rounded-full bg-[#5cc0f5] text-[10px] text-[#0b2a55] flex items-center justify-center font-['Noto_Sans',sans-serif] shrink-0">1</div>
    </div>
  );
}

export default function App() {
  return (
    <div className="w-[1366px] h-[768px] overflow-hidden flex flex-col bg-white">
      <TitleBar />
      <MenuBar />
      <Toolbar />
      <div className="flex-1 min-h-0 flex">
        <SidePane />
        <StoryPane />
      </div>
      <SheetTabs />
      <StatusBar />
      <Taskbar />
    </div>
  );
}
